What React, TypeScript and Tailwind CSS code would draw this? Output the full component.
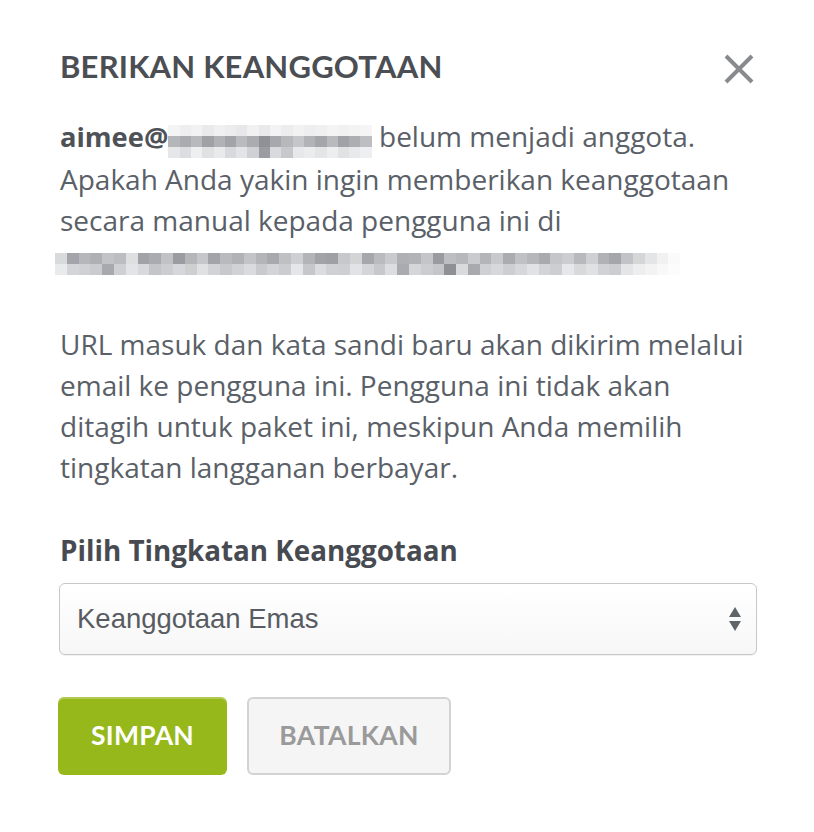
import React from "react";

const emailRows: string[][] = [
  ["#f4f4f5", "#eeeef0", "#f2f2f3", "#eaeaec", "#f0f0f1", "#ececee", "#e8e8ea", "#f1f1f2", "#e9e9eb", "#f3f3f4", "#ededef", "#f2f2f3", "#eeeef0", "#f0f0f1", "#f4f4f5", "#f1f1f2", "#f3f3f4", "#f5f5f6"],
  ["#b4b6ba", "#a9abb0", "#b7b9bd", "#9fa1a6", "#b0b2b6", "#a2a4a9", "#b9bbbf", "#aaacb0", "#8f9197", "#a6a8ad", "#b6b8bc", "#c4c6c9", "#b1b3b7", "#a4a6ab", "#b8babe", "#a0a2a7", "#acaeb2", "#bcbec2"],
  ["#e6e7e9", "#dcdde0", "#eeeff0", "#e0e1e3", "#e9eaec", "#d8d9dc", "#e3e4e6", "#d0d1d4", "#9a9ca1", "#d9dadd", "#c6c8cb", "#e7e8ea", "#ebecee", "#e4e5e7", "#edeeef", "#e1e2e4", "#e8e9eb", "#efeff1"],
];

const line2Rows: string[][] = [
  ["#d9dadc", "#a3a5aa", "#b5b7bb", "#aeb0b4", "#c1c3c6", "#bbbdc1", "#dedfe1", "#a0a2a7", "#a9abb0", "#c0c2c5", "#9a9ca1", "#b4b6ba", "#c5c7ca", "#a2a4a9", "#b8babe", "#b0b2b6", "#c2c4c7", "#b3b5b9", "#a7a9ae", "#bec0c3", "#cdcfd1", "#b2b4b8", "#a1a3a8", "#9ea0a5", "#c6c8cb", "#d3d4d6", "#a5a7ac", "#b9bbbf", "#c8cacd", "#aeb0b4", "#b1b3b7", "#c3c5c8", "#999ba0", "#bcbec1", "#b6b8bc", "#c9cbce", "#b3b5b9", "#c7c9cc", "#aaacb0", "#bfc1c4", "#b5b7bb", "#a8aab0", "#c4c6c9", "#cccdd0", "#b7b9bd", "#ced0d2", "#b0b2b6", "#a4a6ab", "#c1c3c6", "#d5d6d8", "#e4e5e7", "#f1f1f2", "#fafafa"],
  ["#e9eaeb", "#d4d5d8", "#d0d1d4", "#c9cbce", "#a7a9ae", "#cfd0d3", "#e3e4e6", "#d8d9dc", "#c3c5c8", "#cbcdd0", "#d6d7da", "#cdcfd1", "#e0e1e3", "#d2d3d6", "#c7c9cc", "#d1d2d5", "#dadbde", "#c8cacd", "#d3d4d6", "#cacccf", "#e5e6e8", "#c5c7ca", "#dbdcdf", "#d0d1d4", "#cecfd2", "#e2e3e5", "#d4d5d8", "#c6c8cb", "#dcdde0", "#a9abb0", "#d5d6d9", "#cbcdd0", "#c4c6c9", "#8e9096", "#d9dadc", "#a8aab0", "#cfd0d3", "#d7d8db", "#ccced1", "#d6d7da", "#e1e2e4", "#d3d4d7", "#cdced1", "#e6e7e9", "#d8d9db", "#e0e1e3", "#d1d2d5", "#cbcdd0", "#e4e5e7", "#eeeef0", "#f3f3f4", "#f8f8f9", "#fcfcfc"],
];

function Pixels({ rows, cell }: { rows: string[][]; cell: number }) {
  return (
    <span className="inline-flex flex-col align-middle">
      {rows.map((r, i) => (
        <span key={i} className="flex">
          {r.map((c, j) => (
            <span key={j} style={{ backgroundColor: c, width: cell, height: 11 }} />
          ))}
        </span>
      ))}
    </span>
  );
}

export default function App() {
  return (
    <div className="w-[814px] h-[832px] bg-white overflow-hidden">
      <div className="pl-[60px] pr-[57px] pt-[47px]">
        <div className="flex items-start justify-between">
          <h1 className="font-['Lato','Liberation_Sans',sans-serif] font-bold text-[31px] leading-[38px] tracking-[0.2px] text-[#4b4e53]">
            BERIKAN KEANGGOTAAN
          </h1>
          <svg width="32" height="32" viewBox="0 0 32 32" className="mt-[6px] mr-[2px]">
            <path d="M3 3 L29 29 M29 3 L3 29" stroke="#888a8d" strokeWidth="4" strokeLinecap="butt" />
          </svg>
        </div>
        <div className="mt-[31px] font-['Open_Sans','Liberation_Sans',sans-serif] text-[28px] leading-[41px] text-[#5a6068] whitespace-nowrap">
          <p>
            <span className="font-bold text-[27.3px] text-[#4e5258]">aimee@</span>
            <span className="inline-block align-middle -mt-[2px]">
              <Pixels rows={emailRows} cell={11.3} />
            </span>
            {" "}belum menjadi anggota.
            <br />
            Apakah Anda yakin ingin memberikan keanggotaan
            <br />
            secara manual kepada pengguna ini di
          </p>
          <div className="h-[41px] flex items-center -ml-[5px] pt-[4px]">
            <Pixels rows={line2Rows} cell={11.8} />
          </div>
          <p className="mt-[42px]">
            URL masuk dan kata sandi baru akan dikirim melalui
            <br />
            email ke pengguna ini. Pengguna ini tidak akan
            <br />
            ditagih untuk paket ini, meskipun Anda memilih
            <br />
            tingkatan langganan berbayar.
          </p>
          <p className="mt-[42px] font-bold text-[27.8px] text-[#474b51]">Pilih Tingkatan Keanggotaan</p>
        </div>
        <div className="mt-[12px] -ml-[1px] w-[698px] h-[72px] rounded-[6px] border border-[#c8c8c8] bg-gradient-to-b from-[#ffffff] to-[#f7f7f7] shadow-[0_1px_1px_rgba(0,0,0,0.06)] flex items-center justify-between pl-[17px] pr-[14px]">
          <span className="font-['Liberation_Sans','Arial',sans-serif] text-[27.5px] text-[#585c62]">Keanggotaan Emas</span>
          <svg width="14" height="28" viewBox="0 0 14 28">
            <path d="M7 2 L13 12 L1 12 Z" fill="#5f636a" />
            <path d="M1 16 L13 16 L7 26 Z" fill="#5f636a" />
          </svg>
        </div>
        <div className="mt-[42px] -ml-[2px] flex gap-[20px] font-['Lato','Liberation_Sans',sans-serif] font-bold text-[26.5px] tracking-[0.3px]">
          <button className="w-[169px] h-[78px] rounded-[6px] bg-[#96b81b] text-white shadow-[inset_0_2px_0_rgba(255,255,255,0.25)]">
            SIMPAN
          </button>
          <button className="w-[204px] h-[78px] rounded-[6px] bg-[#f5f5f5] border-2 border-[#d3d3d3] text-[#9a9a9a]">
            BATALKAN
          </button>
        </div>
      </div>
    </div>
  );
}
